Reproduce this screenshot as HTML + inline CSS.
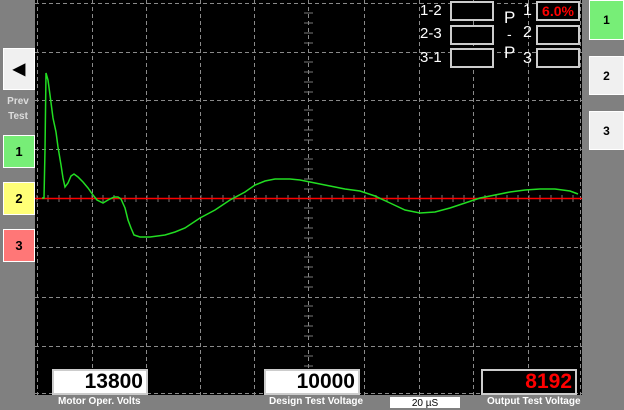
<!DOCTYPE html>
<html><head><meta charset="utf-8"><style>
body{margin:0;width:624px;height:408px;background:#808080;position:relative;overflow:hidden;font-family:"Liberation Sans",sans-serif}
.a{position:absolute}
.btn{position:absolute;border:1px solid #fff;box-sizing:border-box;font-weight:bold;font-size:13px;display:flex;align-items:center;justify-content:center;color:#000}
.bx{position:absolute;border:2px solid #ccc;box-sizing:border-box;background:#000}
.lbl{position:absolute;color:#fff;font-size:15px}
.val{position:absolute;background:#fff;border:2px solid #ccc;box-sizing:border-box;font-size:21px;font-weight:bold;text-align:right;padding-right:3px;line-height:22px}
.bl{position:absolute;color:#fff;font-size:10px;font-weight:bold;top:396px}
</style></head><body>
<svg class="a" style="left:0;top:0" width="624" height="408">
<rect x="35" y="0" width="547" height="395" fill="#000"/>
<g stroke="#8a8a8a" stroke-width="1" stroke-dasharray="4,3">
<line x1="37.5" y1="0" x2="37.5" y2="395"/><line x1="92.5" y1="0" x2="92.5" y2="395"/><line x1="146.5" y1="0" x2="146.5" y2="395"/><line x1="200.5" y1="0" x2="200.5" y2="395"/><line x1="254.5" y1="0" x2="254.5" y2="395"/><line x1="308.5" y1="0" x2="308.5" y2="395"/><line x1="364.5" y1="0" x2="364.5" y2="395"/><line x1="419.5" y1="0" x2="419.5" y2="395"/><line x1="473.5" y1="0" x2="473.5" y2="395"/><line x1="528.5" y1="0" x2="528.5" y2="395"/><line x1="580.5" y1="0" x2="580.5" y2="395"/>
<line x1="35" y1="3.5" x2="582" y2="3.5"/><line x1="35" y1="52.5" x2="582" y2="52.5"/><line x1="35" y1="100.5" x2="582" y2="100.5"/><line x1="35" y1="149.5" x2="582" y2="149.5"/><line x1="35" y1="247.5" x2="582" y2="247.5"/><line x1="35" y1="297.5" x2="582" y2="297.5"/><line x1="35" y1="346.5" x2="582" y2="346.5"/><line x1="35" y1="393.5" x2="582" y2="393.5"/>
</g>
<path d="M37 195v7M48 195v7M59 195v7M70 195v7M81 195v7M92 195v7M103 195v7M114 195v7M125 195v7M136 195v7M147 195v7M158 195v7M169 195v7M180 195v7M191 195v7M201 195v7M212 195v7M223 195v7M234 195v7M245 195v7M256 195v7M266 195v7M277 195v7M288 195v7M299 195v7M310 195v7M321 195v7M332 195v7M343 195v7M354 195v7M365 195v7M376 195v7M387 195v7M398 195v7M409 195v7M420 195v7M431 195v7M442 195v7M453 195v7M464 195v7M474 195v7M485 195v7M496 195v7M507 195v7M518 195v7M529 195v7M540 195v7M551 195v7M562 195v7M573 195v7M304 13h9M304 23h9M304 33h9M304 43h9M304 62h9M304 72h9M304 82h9M304 92h9M304 110h9M304 120h9M304 130h9M304 140h9M304 159h9M304 169h9M304 179h9M304 189h9M304 208h9M304 218h9M304 228h9M304 238h9M304 257h9M304 267h9M304 277h9M304 287h9M304 306h9M304 316h9M304 326h9M304 336h9M304 356h9M304 366h9M304 376h9M304 386h9" stroke="#777" stroke-width="1"/>
<line x1="35" y1="198.5" x2="582" y2="198.5" stroke="#f00" stroke-width="1.5"/>
<polyline fill="none" stroke="#2d2" stroke-width="1.5" points="42,198 44,198 45,150 46,73 48,80 50,95 53,118 56,132 58,147 61,165 63,178 65,187 68,183 71,176 74,174 78,177 83,182 88,188 93,195 97,200 103,203 108,200 114,197 118,197 121,199 125,208 128,220 131,228 134,235 140,237 150,237 165,235 175,232 185,228 200,218 215,210 230,200 245,192 255,185 265,181 275,179 290,179 300,180 315,183 330,186 345,189 360,191 375,196 390,203 405,210 420,213 435,212 450,208 465,203 480,198 495,195 510,192 525,190 540,189 555,189 570,191 578,194"/>
</svg>
<div class="btn" style="left:3px;top:48px;width:32px;height:42px;background:#f0f0f0;font-size:16px">◀</div>
<div class="a" style="left:0;top:94px;width:36px;text-align:center;color:#ddd;font-size:10px;font-weight:bold;line-height:15px">Prev<br>Test</div>
<div class="btn" style="left:3px;top:135px;width:32px;height:33px;background:#7e7">1</div>
<div class="btn" style="left:3px;top:182px;width:32px;height:33px;background:#ff7">2</div>
<div class="btn" style="left:3px;top:229px;width:32px;height:33px;background:#f77">3</div>
<div class="btn" style="left:589px;top:0;width:35px;height:40px;background:#7e7;font-size:12px">1</div>
<div class="btn" style="left:589px;top:56px;width:35px;height:39px;background:#f0f0f0;font-size:12px">2</div>
<div class="btn" style="left:589px;top:111px;width:35px;height:39px;background:#f0f0f0;font-size:12px">3</div>
<div class="lbl" style="left:420px;top:2px">1-2</div>
<div class="lbl" style="left:420px;top:25px">2-3</div>
<div class="lbl" style="left:420px;top:49px">3-1</div>
<div class="bx" style="left:450px;top:1px;width:44px;height:20px"></div>
<div class="bx" style="left:450px;top:25px;width:44px;height:20px"></div>
<div class="bx" style="left:450px;top:48px;width:44px;height:20px"></div>
<div class="lbl" style="left:504px;top:8px;font-size:17px">P</div>
<div class="lbl" style="left:507px;top:26px;font-size:14px">-</div>
<div class="lbl" style="left:504px;top:43px;font-size:17px">P</div>
<div class="lbl" style="left:523px;top:2px;font-size:16px">1</div>
<div class="lbl" style="left:523px;top:24px;font-size:16px">2</div>
<div class="lbl" style="left:523px;top:50px;font-size:16px">3</div>
<div class="bx" style="left:536px;top:1px;width:44px;height:20px;color:#f00;font-weight:bold;font-size:14px;text-align:center;line-height:16px">6.0%</div>
<div class="bx" style="left:536px;top:25px;width:44px;height:20px"></div>
<div class="bx" style="left:536px;top:48px;width:44px;height:20px"></div>
<div class="val" style="left:52px;top:369px;width:96px;height:26px">13800</div>
<div class="val" style="left:264px;top:369px;width:96px;height:26px">10000</div>
<div class="val" style="left:481px;top:369px;width:96px;height:26px;background:#000;color:#f00">8192</div>
<div class="bl" style="left:58px">Motor Oper. Volts</div>
<div class="bl" style="left:269px">Design Test Voltage</div>
<div class="bl" style="left:487px">Output Test Voltage</div>
<div class="a" style="left:390px;top:397px;width:70px;height:11px;background:#fff;font-size:10px;text-align:center;line-height:13px">20 µS</div>
</body></html>
